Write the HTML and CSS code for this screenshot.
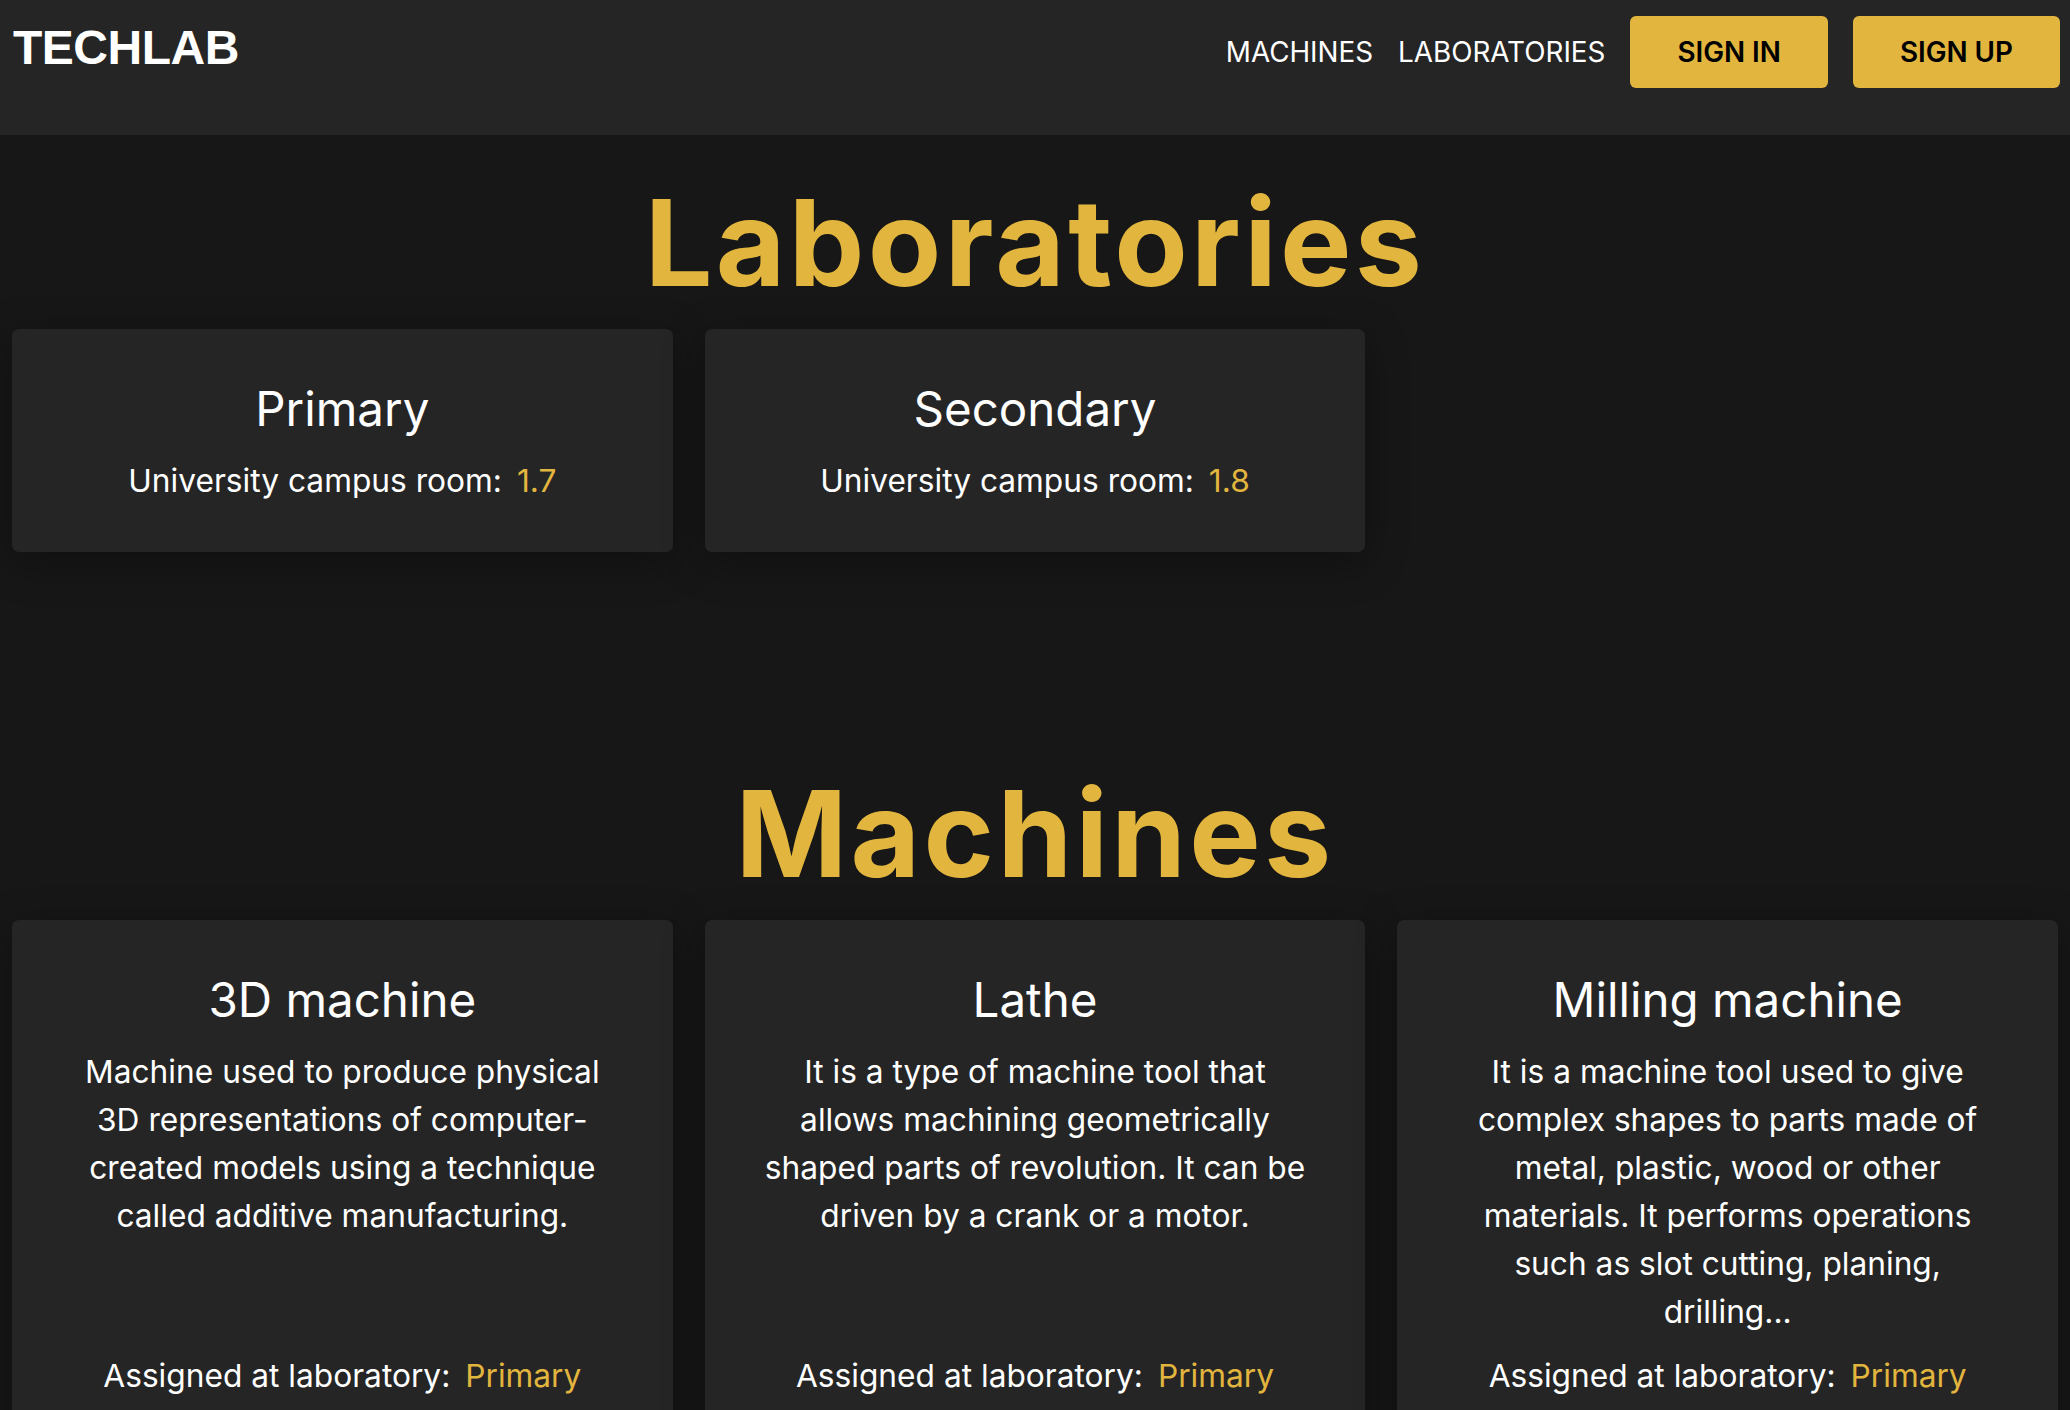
FILE: index.html
```html
<!DOCTYPE html>
<html lang="en">
<head>
<meta charset="utf-8">
<title>TechLab</title>
<link rel="stylesheet" href="styles.css">
</head>
<body>
<header class="topbar">
  <a class="logo" href="#">TECHLAB</a>
  <nav class="nav">
    <a class="nav-link" href="#machines">MACHINES</a>
    <a class="nav-link" href="#laboratories">LABORATORIES</a>
    <a class="btn" href="#">SIGN IN</a>
    <a class="btn" href="#">SIGN UP</a>
  </nav>
</header>
<main>
  <section class="section section-labs" id="laboratories">
    <h1 class="section-title">Laboratories</h1>
    <div class="grid">
      <article class="card">
        <h2 class="card-title">Primary</h2>
        <p class="card-text">University campus room: <span class="value">1.7</span></p>
      </article>
      <article class="card">
        <h2 class="card-title">Secondary</h2>
        <p class="card-text">University campus room: <span class="value">1.8</span></p>
      </article>
    </div>
  </section>
  <section class="section" id="machines">
    <h1 class="section-title">Machines</h1>
    <div class="grid">
      <article class="card">
        <h2 class="card-title">3D machine</h2>
        <p class="card-text">Machine used to produce physical 3D representations of computer-created models using a technique called additive manufacturing.</p>
        <p class="card-text card-foot">Assigned at laboratory: <span class="value">Primary</span></p>
      </article>
      <article class="card">
        <h2 class="card-title">Lathe</h2>
        <p class="card-text">It is a type of machine tool that allows machining geometrically shaped parts of revolution. It can be driven by a crank or a motor.</p>
        <p class="card-text card-foot">Assigned at laboratory: <span class="value">Primary</span></p>
      </article>
      <article class="card">
        <h2 class="card-title">Milling machine</h2>
        <p class="card-text">It is a machine tool used to give complex shapes to parts made of metal, plastic, wood or other materials. It performs operations such as slot cutting, planing, drilling...</p>
        <p class="card-text card-foot">Assigned at laboratory: <span class="value">Primary</span></p>
      </article>
    </div>
  </section>
</main>
</body>
</html>
```

FILE: styles.css
```css
* {
  box-sizing: border-box;
}

html, body {
  margin: 0;
  padding: 0;
}

body {
  background: #171717;
  color: #ffffff;
  font-family: Inter, "Noto Sans", "Liberation Sans", sans-serif;
}

a {
  text-decoration: none;
}

.topbar {
  height: 135px;
  background: #252525;
  display: flex;
  align-items: flex-start;
  justify-content: space-between;
  padding: 16px 10px 0 13px;
}

.logo {
  font-family: "Liberation Sans", Arial, sans-serif;
  font-weight: 700;
  font-size: 48px;
  line-height: 1;
  color: #ffffff;
  margin-top: 8px;
  letter-spacing: -0.5px;
}

.nav {
  display: flex;
  align-items: center;
  gap: 25px;
  height: 72px;
}

.nav-link {
  color: #ffffff;
  font-size: 27.8px;
  font-weight: 400;
}

.btn {
  display: flex;
  align-items: center;
  justify-content: center;
  height: 72px;
  padding: 0 47px;
  background: #e2b53e;
  color: #000000;
  font-size: 27.8px;
  font-weight: 600;
  border-radius: 6px;
}

.section {
  padding: 35px 12px 0 12px;
}

.section-labs {
  padding-bottom: 174px;
}

.section-title {
  margin: 0 0 14px 0;
  text-align: center;
  color: #e2b53e;
  font-size: 120px;
  font-weight: 700;
  line-height: 1.21;
  letter-spacing: 3.3px;
}

.grid {
  display: grid;
  grid-template-columns: repeat(3, 1fr);
  gap: 32px;
}

.card {
  background: #252525;
  border-radius: 7px;
  padding: 51px 52px 47px;
  text-align: center;
  display: flex;
  flex-direction: column;
  box-shadow: 0 10px 40px rgba(0, 0, 0, 0.35);
}

.card-title {
  margin: 0 0 20px 0;
  font-size: 47.5px;
  font-weight: 400;
  line-height: 57px;
}

.card-text {
  margin: 0;
  font-size: 31.7px;
  line-height: 48px;
}

.card-foot {
  margin-top: auto;
  padding-top: 16px;
}

.value {
  color: #e2b53e;
  margin-left: 6px;
}
```
